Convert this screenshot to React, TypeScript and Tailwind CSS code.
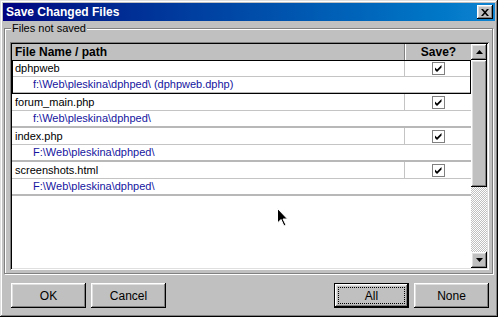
const raised =
  "shadow-[inset_-1px_-1px_#000,inset_1px_1px_#fff,inset_-2px_-2px_#808080,inset_2px_2px_#dfdfdf]"

const files = [
  { name: "dphpweb", path: "f:\\Web\\pleskina\\dphped\\ (dphpweb.dphp)", focused: true },
  { name: "forum_main.php", path: "f:\\Web\\pleskina\\dphped\\" },
  { name: "index.php", path: "F:\\Web\\pleskina\\dphped\\" },
  { name: "screenshots.html", path: "F:\\Web\\pleskina\\dphped\\" },
]

function CheckBox() {
  return (
    <div className="w-[13px] h-[13px] bg-white border border-[#808080] flex items-center justify-center">
      <svg width="11" height="11" viewBox="0 0 11 11">
        <path d="M2 4.5 L4 6.5 L8.5 2 L8.5 4.5 L4 9 L2 7 Z" fill="#000" />
      </svg>
    </div>
  )
}

function Arrow({ down }: { down?: boolean }) {
  return (
    <div className={`w-[16px] h-[16px] bg-[#c0c0c0] flex items-center justify-center ${raised}`}>
      <svg width="7" height="4" viewBox="0 0 7 4" className={down ? "rotate-180" : ""}>
        <path d="M3.5 0 L7 4 L0 4 Z" fill="#000" />
      </svg>
    </div>
  )
}

function Button({ label, isDefault }: { label: string; isDefault?: boolean }) {
  if (isDefault) {
    return (
      <div className="w-[75px] h-[25px] border border-black">
        <div className={`w-full h-full bg-[#c0c0c0] p-[3px] ${raised}`}>
          <div className="w-full h-full border border-dotted border-black flex items-center justify-center text-[12px]">
            {label}
          </div>
        </div>
      </div>
    )
  }
  return (
    <div className={`w-[75px] h-[25px] bg-[#c0c0c0] flex items-center justify-center text-[12px] ${raised}`}>
      {label}
    </div>
  )
}

export default function App() {
  return (
    <div
      className="relative w-[498px] h-[317px] bg-[#c0c0c0] p-[3px] flex flex-col text-black shadow-[inset_-1px_-1px_#000,inset_1px_1px_#dfdfdf,inset_-2px_-2px_#808080,inset_2px_2px_#fff]"
      style={{ fontFamily: '"Liberation Sans", Arial, sans-serif' }}
    >
      {/* title bar */}
      <div className="h-[18px] bg-linear-to-r from-[#000080] to-[#1084d0] flex items-center justify-between pl-[3px] pr-[2px]">
        <span className="text-white font-bold text-[12px]">Save Changed Files</span>
        <div className={`w-[16px] h-[14px] bg-[#c0c0c0] flex items-center justify-center ${raised}`}>
          <svg width="8" height="7" viewBox="0 0 8 7">
            <path d="M0 0h2l2 2.3 2-2.3h2l-3 3.5 3 3.5h-2l-2-2.3-2 2.3h-2l3-3.5z" fill="#000" />
          </svg>
        </div>
      </div>

      {/* group box */}
      <div className="relative mt-[7px] ml-[1px] w-[489px] h-[246px] border border-[#808080] shadow-[inset_1px_1px_#fff,1px_1px_#fff]">
        <span className="absolute -top-[7px] left-[6px] px-[1px] bg-[#c0c0c0] text-[11px] leading-[13px]">
          Files not saved
        </span>

        {/* list */}
        <div className="mt-[13px] ml-[5px] w-[479px] h-[228px] p-[2px] bg-white flex shadow-[inset_1px_1px_#808080,inset_-1px_-1px_#fff,inset_2px_2px_#000,inset_-2px_-2px_#dfdfdf]">
          <div className="w-[459px] flex flex-col">
            <div className="h-[16px] flex bg-[#c0c0c0] font-bold text-[12px]">
              <div className="w-[393px] pl-[3px] flex items-center border-r border-[#808080]">File Name / path</div>
              <div className="flex-1 flex items-center justify-center border-l border-white">Save?</div>
            </div>
            {files.map((f) => (
              <div key={f.name} className={f.focused ? "outline outline-black -outline-offset-1" : ""}>
                <div className="h-[17px] flex border-b border-[#c4c4c4] text-[11px]">
                  <div className="w-[393px] pl-[3px] flex items-center border-r border-[#c4c4c4]">{f.name}</div>
                  <div className="flex-1 flex items-center justify-center">
                    <CheckBox />
                  </div>
                </div>
                <div className="h-[17px] pl-[21px] flex items-center border-b-2 border-[#b8b8b8] text-[11px] text-[#1515a0]">
                  {f.path}
                </div>
              </div>
            ))}
          </div>

          {/* scrollbar */}
          <div className="w-[16px] flex flex-col">
            <Arrow />
            <div className={`h-[127px] bg-[#c0c0c0] ${raised}`} />
            <div className="flex-1 bg-[repeating-conic-gradient(#c0c0c0_0_25%,#fff_0_50%)] bg-[length:2px_2px]" />
            <Arrow down />
          </div>
        </div>
      </div>

      {/* buttons */}
      <div className="mt-[9px] pl-[8px] pr-[6px] flex justify-between">
        <div className="flex gap-[5px]">
          <Button label="OK" />
          <Button label="Cancel" />
        </div>
        <div className="flex gap-[5px]">
          <Button label="All" isDefault />
          <Button label="None" />
        </div>
      </div>

      {/* mouse pointer */}
      <svg className="absolute left-[277px] top-[208px]" width="12" height="19" viewBox="0 0 12 19">
        <path d="M0.5 0.5 V15 L4 11.5 L7 18 L9 17 L6 11 H10.5 Z" fill="#000" stroke="#fff" strokeWidth="1" />
      </svg>
    </div>
  )
}
